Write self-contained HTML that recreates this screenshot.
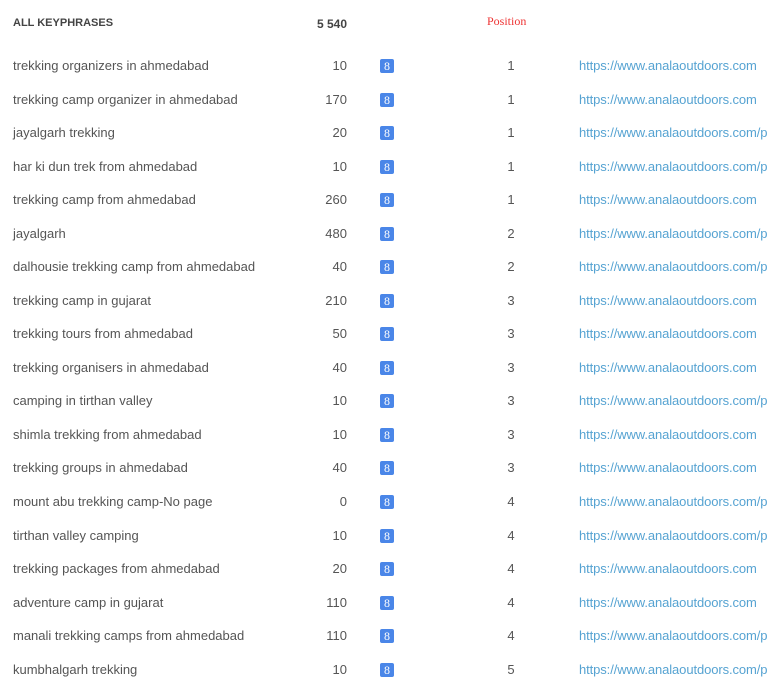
<!DOCTYPE html>
<html><head><meta charset="utf-8"><style>
body{margin:0;width:768px;height:695px;background:#fff;overflow:hidden;font-family:"Liberation Sans",sans-serif;position:relative}
.h{position:absolute;top:17px;font-size:11px;font-weight:bold;color:#444}
.pos{position:absolute;left:487px;top:14px;font-family:"Liberation Serif",serif;font-size:12px;color:#e33}
.r{position:absolute;left:0;width:768px;height:20px;font-size:13px;color:#555;white-space:nowrap}
.k{position:absolute;left:13px;top:0}
.n{position:absolute;right:421px;top:0;text-align:right}
.g{position:absolute;left:380px;top:1px;width:14px;height:14px;background:#4a86e8;border-radius:2px;color:#fff;font-family:"Liberation Serif",serif;font-size:12px;line-height:14px;text-align:center}
.p{position:absolute;left:500px;width:22px;text-align:center;top:0}
.u{position:absolute;left:579px;top:0;color:#56a3d2;letter-spacing:-0.1px}
</style></head><body>
<div class="h" style="left:13px">ALL KEYPHRASES</div>
<div class="h" style="right:421px;font-size:12px">5 540</div>
<div class="pos">Position</div>
<div class="r" style="top:58px"><span class="k">trekking organizers in ahmedabad</span><span class="n">10</span><span class="g">8</span><span class="p">1</span><span class="u">https://www.analaoutdoors.com</span></div>
<div class="r" style="top:92px"><span class="k">trekking camp organizer in ahmedabad</span><span class="n">170</span><span class="g">8</span><span class="p">1</span><span class="u">https://www.analaoutdoors.com</span></div>
<div class="r" style="top:125px"><span class="k">jayalgarh trekking</span><span class="n">20</span><span class="g">8</span><span class="p">1</span><span class="u">https://www.analaoutdoors.com/p</span></div>
<div class="r" style="top:159px"><span class="k">har ki dun trek from ahmedabad</span><span class="n">10</span><span class="g">8</span><span class="p">1</span><span class="u">https://www.analaoutdoors.com/p</span></div>
<div class="r" style="top:192px"><span class="k">trekking camp from ahmedabad</span><span class="n">260</span><span class="g">8</span><span class="p">1</span><span class="u">https://www.analaoutdoors.com</span></div>
<div class="r" style="top:226px"><span class="k">jayalgarh</span><span class="n">480</span><span class="g">8</span><span class="p">2</span><span class="u">https://www.analaoutdoors.com/p</span></div>
<div class="r" style="top:259px"><span class="k">dalhousie trekking camp from ahmedabad</span><span class="n">40</span><span class="g">8</span><span class="p">2</span><span class="u">https://www.analaoutdoors.com/p</span></div>
<div class="r" style="top:293px"><span class="k">trekking camp in gujarat</span><span class="n">210</span><span class="g">8</span><span class="p">3</span><span class="u">https://www.analaoutdoors.com</span></div>
<div class="r" style="top:326px"><span class="k">trekking tours from ahmedabad</span><span class="n">50</span><span class="g">8</span><span class="p">3</span><span class="u">https://www.analaoutdoors.com</span></div>
<div class="r" style="top:360px"><span class="k">trekking organisers in ahmedabad</span><span class="n">40</span><span class="g">8</span><span class="p">3</span><span class="u">https://www.analaoutdoors.com</span></div>
<div class="r" style="top:393px"><span class="k">camping in tirthan valley</span><span class="n">10</span><span class="g">8</span><span class="p">3</span><span class="u">https://www.analaoutdoors.com/p</span></div>
<div class="r" style="top:427px"><span class="k">shimla trekking from ahmedabad</span><span class="n">10</span><span class="g">8</span><span class="p">3</span><span class="u">https://www.analaoutdoors.com</span></div>
<div class="r" style="top:460px"><span class="k">trekking groups in ahmedabad</span><span class="n">40</span><span class="g">8</span><span class="p">3</span><span class="u">https://www.analaoutdoors.com</span></div>
<div class="r" style="top:494px"><span class="k">mount abu trekking camp-No page</span><span class="n">0</span><span class="g">8</span><span class="p">4</span><span class="u">https://www.analaoutdoors.com/p</span></div>
<div class="r" style="top:528px"><span class="k">tirthan valley camping</span><span class="n">10</span><span class="g">8</span><span class="p">4</span><span class="u">https://www.analaoutdoors.com/p</span></div>
<div class="r" style="top:561px"><span class="k">trekking packages from ahmedabad</span><span class="n">20</span><span class="g">8</span><span class="p">4</span><span class="u">https://www.analaoutdoors.com</span></div>
<div class="r" style="top:595px"><span class="k">adventure camp in gujarat</span><span class="n">110</span><span class="g">8</span><span class="p">4</span><span class="u">https://www.analaoutdoors.com</span></div>
<div class="r" style="top:628px"><span class="k">manali trekking camps from ahmedabad</span><span class="n">110</span><span class="g">8</span><span class="p">4</span><span class="u">https://www.analaoutdoors.com/p</span></div>
<div class="r" style="top:662px"><span class="k">kumbhalgarh trekking</span><span class="n">10</span><span class="g">8</span><span class="p">5</span><span class="u">https://www.analaoutdoors.com/p</span></div>
</body></html>
